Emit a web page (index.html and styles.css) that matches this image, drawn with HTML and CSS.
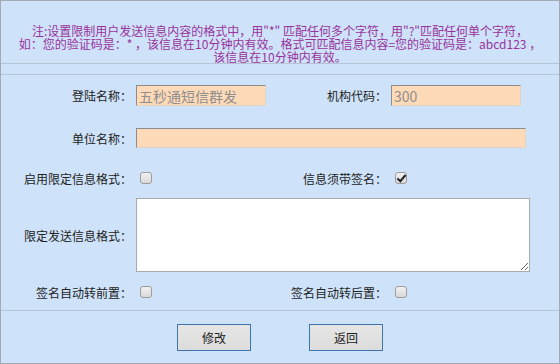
FILE: index.html
```html
<!DOCTYPE html>
<html lang="zh-CN">
  <head>
    <meta charset="UTF-8" />
    <title>短信格式设置</title>
    <link rel="stylesheet" href="styles.css">
  </head>
  <body>
    <div class="panel">
      <div class="note">
        注:设置限制用户发送信息内容的格式中，用"*" 匹配任何多个字符，用"?"匹配任何单个字符，<br />
        如：您的验证码是：* ，该信息在10分钟内有效。格式可匹配信息内容=您的验证码是：abcd123 ，<br />
        该信息在10分钟内有效。
      </div>

      <form class="setting-form">
        <div class="form-grid">
          <label class="lbl">登陆名称：</label>
          <div class="fld"><input type="text" class="txt" value="五秒通短信群发" readonly /></div>
          <label class="lbl">机构代码：</label>
          <div class="fld"><input type="text" class="txt" value="300" readonly /></div>

          <label class="lbl">单位名称：</label>
          <div class="fld wide"><input type="text" class="txt txt-long" /></div>

          <label class="lbl">启用限定信息格式：</label>
          <div class="fld"><input type="checkbox" class="chk" /></div>
          <label class="lbl">信息须带签名：</label>
          <div class="fld"><input type="checkbox" class="chk" checked /></div>

          <label class="lbl">限定发送信息格式：</label>
          <div class="fld wide"><textarea class="area"></textarea></div>

          <label class="lbl">签名自动转前置：</label>
          <div class="fld"><input type="checkbox" class="chk" /></div>
          <label class="lbl">签名自动转后置：</label>
          <div class="fld"><input type="checkbox" class="chk" /></div>
        </div>

        <div class="actions">
          <button type="submit" class="btn">修改</button>
          <button type="button" class="btn">返回</button>
        </div>
      </form>
    </div>
  </body>
</html>
```

FILE: styles.css
```css
html,
body {
  margin: 0;
  padding: 0;
  background-color: #cee2fa;
}
* {
  font-family: "Noto Sans CJK SC", "Liberation Sans", sans-serif;
}
.panel {
  box-sizing: border-box;
  width: 560px;
  height: 364px;
  border: 1px solid #a3a9b3;
  background-color: #cee2fa;
  display: flex;
  flex-direction: column;
}
.note {
  padding-top: 23px;
  height: 39px;
  font-size: 12px;
  line-height: 13px;
  color: #99339c;
  text-align: center;
  white-space: nowrap;
  border-bottom: 1px solid #b6c4d6;
}
.setting-form {
  margin: 10px 0 0;
  border-top: 1px solid #b6c4d6;
  flex: 1;
  display: flex;
  flex-direction: column;
}
.form-grid {
  display: grid;
  grid-template-columns: 135px 130px 125px 1fr;
  grid-template-rows: 41px 44px 36px 78px 36px;
  align-items: center;
}
.lbl {
  text-align: right;
  padding-right: 4px;
  font-size: 12px;
  color: #222;
  white-space: nowrap;
}
.fld {
  display: flex;
  align-items: center;
}
.wide {
  grid-column: 2 / 5;
}
.txt {
  box-sizing: border-box;
  width: 130px;
  height: 21px;
  margin: 0;
  padding: 0 2px;
  font-size: 14px;
  color: #8e8e8e;
  background-color: #ffdab9;
  border: 1px solid;
  border-color: #8c8c8c #e0d4c8 #e0d4c8 #8c8c8c;
  outline: none;
}
.txt-long {
  width: 390px;
  height: 20px;
}
.chk {
  appearance: none;
  -webkit-appearance: none;
  box-sizing: border-box;
  width: 12px;
  height: 12px;
  margin: 0 0 0 4px;
  border: 1px solid #9c9c9c;
  border-radius: 3px;
  background: linear-gradient(#f1f1f1, #d9d9d9);
  position: relative;
}
.chk:checked::after {
  content: "";
  position: absolute;
  left: 3px;
  top: 0px;
  width: 3px;
  height: 7px;
  border: solid #222;
  border-width: 0 2px 2px 0;
  transform: rotate(40deg);
}
.area {
  box-sizing: border-box;
  width: 394px;
  height: 74px;
  margin: 0;
  border: 1px solid #a9a9a9;
  background-color: #fff;
  outline: none;
}
.actions {
  flex: 1;
  border-top: 1px solid #b6c4d6;
  display: flex;
  justify-content: center;
  align-items: flex-start;
  gap: 58px;
  padding-top: 13px;
}
.btn {
  width: 74px;
  height: 27px;
  font-size: 12px;
  color: #222;
  background: linear-gradient(#e6e6e6, #dcdcdc);
  border: 1px solid #3d75b4;
  border-radius: 0;
  cursor: pointer;
}
```
